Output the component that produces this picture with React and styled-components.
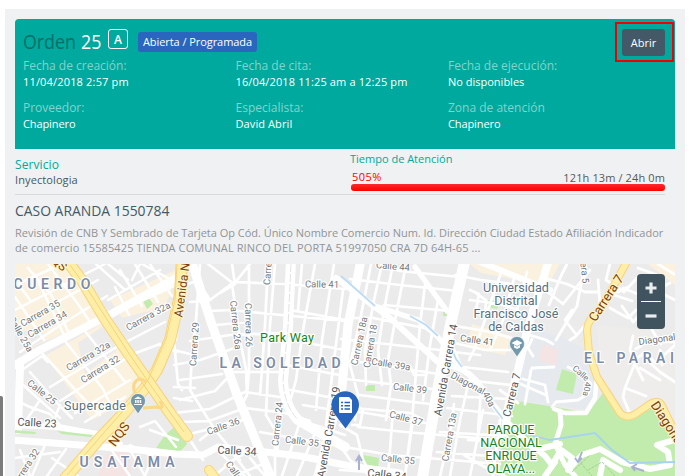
import React from "react";
import styled, { createGlobalStyle } from "styled-components";

const GlobalStyle = createGlobalStyle`
  * { box-sizing: border-box; }
  body { margin: 0; background: #fff; overflow: hidden; font-family: "Open Sans", "Noto Sans", sans-serif; }
`;

const Page = styled.div`
  display: flex;
  width: 689px;
  height: 476px;
  background: #fff;
`;
const Rail = styled.div`
  display: flex;
  align-items: flex-end;
  flex: 0 0 5px;
`;
const RailHandle = styled.div`
  width: 3px;
  height: 80px;
  background: #7c7c7c;
  border-top-right-radius: 2px;
`;
const Panel = styled.main`
  width: 680px;
  height: 467px;
  margin-top: 9px;
  padding: 10px 10px 0;
  background: #eff1f3;
  overflow: hidden;
`;
const OrderCard = styled.header`
  height: 130px;
  background: #00a99d;
  border-radius: 4px 4px 0 0;
  padding: 3px 1px 0 8px;
`;
const TitleRow = styled.div`
  display: flex;
  align-items: flex-start;
  height: 35px;
`;
const Title = styled.h1`
  width: ${(p) => p.$width};
  margin: 4px 0 0;
  font-weight: ${(p) => p.$weight || 400};
  font-size: 20px;
  line-height: 32px;
  transform: scaleX(0.89);
  transform-origin: left center;
  color: ${(p) => p.$color};
  white-space: nowrap;
`;
const TypeBadge = styled.span`
  width: 20px;
  height: 20px;
  margin: 7px 10px 0 0;
  border: 1px solid #fff;
  border-radius: 3px;
  color: #fff;
  font-size: 12px;
  font-weight: 600;
  line-height: 19px;
  text-align: center;
`;
const StatusTag = styled.span`
  width: 119px;
  height: 20px;
  margin-top: 10px;
  border-radius: 3px;
  background: #2a66bd;
  color: #fff;
  font-size: 11px;
  font-weight: 500;
  line-height: 20px;
  text-align: center;
  letter-spacing: -0.06px;
  white-space: nowrap;
`;
const Highlight = styled.div`
  width: 59px;
  height: 40px;
  margin-left: auto;
  border: 2px solid #f00000;
  padding: 5px;
`;
const OpenButton = styled.button`
  width: 43px;
  height: 27px;
  border: 0;
  border-radius: 3px;
  padding: 0;
  background: #435967;
  color: #fff;
  font: 500 11px "Open Sans", sans-serif;
`;
const Fields = styled.dl`
  display: grid;
  grid-template-columns: 212.5px 212.5px 1fr;
  grid-auto-rows: 42px;
  margin: 0;
`;
const FieldName = styled.dt`
  height: 17px;
  line-height: 17px;
  font-size: 12px;
  color: #80d4ce;
`;
const FieldValue = styled.dd`
  margin: 0;
  line-height: 16px;
  font-size: 11px;
  font-weight: 500;
  letter-spacing: ${(p) => p.$spacing || "0"};
  color: #fff;
  white-space: nowrap;
`;
const ServiceRow = styled.section`
  display: grid;
  grid-template-columns: 335px 315px;
  width: 650px;
  height: 46px;
  border-bottom: 1px solid #d9dadd;
`;
const ServiceName = styled.div`
  padding-top: 7px;
  font-size: 12px;
  letter-spacing: 0.1px;
  line-height: 17px;
  color: #00a99d;
`;
const ServiceValue = styled.div`
  font-size: 11px;
  line-height: 14px;
  letter-spacing: 0.1px;
  color: #435967;
`;
const TimeTitle = styled.div`
  font-size: 11px;
  line-height: 20px;
  height: 21px;
  color: #00a99d;
`;
const TimeFigures = styled.div`
  display: flex;
  justify-content: space-between;
  height: 14px;
  padding-left: 2px;
  font-size: 11px;
  line-height: 15px;
  color: #55595c;
  letter-spacing: 0.12px;
`;
const Percent = styled.span`
  color: #f00;
  line-height: 13px;
  letter-spacing: 0.5px;
`;
const Meter = styled.div`
  height: 7px;
  margin-left: 1px;
  border-radius: 3px;
  background: linear-gradient(#ff2a2a, #f00);
`;
const CaseTitle = styled.h2`
  margin: 3px 0 0;
  height: 26px;
  font-size: 15px;
  line-height: 24px;
  font-weight: 400;
  transform: scaleX(0.927);
  transform-origin: left center;
  color: #435967;
`;
const Description = styled.p`
  margin: 0;
  padding-top: 1px;
  height: 40px;
  font-size: 11px;
  line-height: 15px;
  color: #929497;
`;
const DescriptionLine = styled.span`
  display: block;
  letter-spacing: ${(p) => p.$spacing};
  white-space: nowrap;
`;
const MapFrame = styled.section`
  position: relative;
  height: 212px;
  overflow: hidden;
`;
const MapCanvas = styled.svg`
  display: block;
  width: 660px;
  height: 212px;
  font-family: Roboto, sans-serif;
`;
const ZoomControl = styled.div`
  position: absolute;
  top: 10px;
  right: 10px;
  display: flex;
  flex-direction: column;
  width: 28px;
  height: 55px;
  border-radius: 4px;
  background: #40545f;
`;
const ZoomButton = styled.button`
  flex: 1;
  display: grid;
  place-items: center;
  margin: 0 4px;
  padding: 0;
  border: 0;
  border-bottom: ${(p) => (p.$divided ? "1px solid #fff" : "0")};
  background: none;
`;

const Roads = ({ d, w = 3, color = "#fff" }) => (
  <path d={d} fill="none" stroke={color} strokeWidth={w} strokeLinecap="round" strokeLinejoin="round" />
);

const YellowRoad = ({ d, w = 8 }) => (
  <>
    <Roads d={d} w={w + 2} color="#f9d27a" />
    <Roads d={d} w={w} color="#ffeea6" />
  </>
);

const Label = ({ x, y, r = 0, size = 9.5, color = "#74787b", weight = 400, w, halo = "#fff", children }) => (
  <text
    transform={`translate(${x} ${y}) rotate(${r})`}
    textAnchor="middle"
    dominantBaseline="central"
    fontSize={size}
    fontWeight={weight}
    fill={color}
    stroke={halo}
    strokeWidth="2.4"
    strokeLinejoin="round"
    paintOrder="stroke"
    textLength={w}
  >
    {children}
  </text>
);

const minorLeft = `
M15 285L62 264 M15 310L105 264 M15 328L52 305L98 280 M20 352L62 324L107 296 M28 268L52 296L70 336
M48 264L78 304L92 325 M70 270L99 309 M84 278L108 314 M15 297L44 340 M36 277L65 337 M15 280L30 300
M108 300L160 270 M122 310L180 283 M130 325L185 300 M120 270L142 306 M135 264L158 302 M150 264L172 296
M115 287L129 315 M96 264L125 290 M108 264L128 280 M140 264L132 280
M43 354L80 395L100 415 M65 341L103 389L112 408 M85 331L125 382 M102 321L132 365
M30 372L58 404L72 418 M50 387L120 345L165 322 M60 401L133 354L160 344 M75 413L130 380 M85 422L125 397
M22 370L42 356L48 362 M15 400L30 407L50 414L60 425 M22 384L60 418 M40 400L25 422 M60 405L52 425
M15 458L60 452 M45 445L32 476 M66 449L47 476 M85 450L63 476 M20 450L30 476 M52 458L78 476
M142 264L168 278 M160 345L177 352 M110 448L130 476 M130 450L145 476 M140 427L155 421L176 447
M150 430L178 440 M130 445L150 455 M153 455L145 476`;
const minorCenter = `
M183 285L198 281L210 300L234 282L285 284L345 289 M190 302L208 301 M210 311L230 310L345 321
M200 264L196 320L192 355L190 390L215 430L240 460 M232 284L240 340L246 369L247 395L239 410
M249 264L249 370L247 395 M268 264L265 325L262 370L260 395 M275 264L270 325L266 415
M215 325L251 322 M190 341L230 335L280 333 M174 365L200 360L232 349 M180 380L222 374 M180 400L215 391L233 372L283 372
M174 413L210 409L245 392L280 397 M181 422L209 421L245 408L285 413L310 421 M190 434L225 425L250 418
M200 440L218 426L235 420 M203 460L190 440 M234 455L250 476 M218 451L245 476 M260 432L310 441L340 446
M266 415L275 430L275 476 M280 415L277 455 M300 422L282 476 M315 433L297 476 M235 476L265 463 M225 465L250 450
M315 264L303 330L296 380L290 402 M334 264L322 340L316 410 M343 290L334 360L326 425 M302 264L298 310
M290 310L345 320 M286 339L345 350 M286 365L345 376 M290 390L345 400 M303 405L345 412 M315 425L345 435
M174 342L178 384L182 390 M178 285L176 340 M174 350L190 354 M174 387L195 388 M174 398L192 401
M232 264L235 284L220 293 M208 264L234 284L250 264 M215 475L230 463 M250 458L265 476`;
const minorRight = `
M371 264L366 290L360 320L350 365L358 395L355 420 M382 264L374 300L365 350L366 385 M393 264L384 310L378 350L382 385
M405 270L397 310L388 360L391 385L386 420 M425 285L420 325L412 420L405 476 M438 300L430 345L423 400 M350 279L400 285L458 291
M385 267L400 271L460 277 M384 305L450 311 M346 318L373 318L430 329 M341 339L440 350 M343 360L384 365L438 374
M346 379L390 384L433 389 M360 395L405 401L430 404 M353 408L410 413L422 419 M342 411L360 412L431 424
M358 427L405 432L500 440 M345 447L390 455L500 464 M340 470L400 474 M350 400L363 410L360 425L352 425
M340 425L357 435L363 460L372 476 M340 445L350 460L370 476 M410 366L414 375L426 375 M413 420L405 476 M393 410L388 476
M450 325L490 332L511 338 M450 342L485 350L510 350 M453 352L480 355 M444 365L508 372 M447 378L512 385
M452 396L508 399 M447 408L512 416 M440 432L507 436 M468 440L498 442 M437 452L503 457 M468 385L460 420L450 476
M454 404L450 435L440 476 M464 455L490 470L505 476 M483 410L470 476 M500 420L493 476 M481 391L478 430
M477 294L486 300L485 320L474 350L469 360 M470 290L479 294L475 315 M455 275L481 280L525 286 M470 300L500 304L518 310
M502 270L488 310 M515 275L503 320L490 350 M527 272L515 318 M450 340L461 366L466 374`;
const minorEast = `
M567 264L561 276L549 305 M548 279L567 284L585 292L597 292 M549 293L563 304L590 270 M585 264L580 290L577 306L568 320L556 340
M598 280L600 305L587 323L575 337L570 340 M572 310L565 320L575 333 M530 335L546 340L553 344
M523 379L545 385L548 402 M516 382L546 395 M531 370L525 404 M518 403L500 390 M532 339L528 348L533 356 M532 368L554 367
M610 264L606 280L624 292L637 278 M623 288L640 295L642 302L650 305 M610 308L628 318L636 310 M622 306L633 322L640 315
M628 287L618 292L608 292 M614 295L632 301 M674 274L658 264 M670 283L652 292 M665 295L675 300 M638 268L660 276
M633 336L630 350L635 363L625 388L623 397L630 414 M636 349L648 341L675 342 M640 368L660 380 M635 360L645 352L655 363L675 345
M636 366L643 380 M625 388L646 396 M647 360L660 372L675 382 M662 365L660 350 M652 330L661 344
M568 367L582 374L591 384L588 394L578 400L556 402L552 407`;

const labels = [
  { t: "Carrera 35", x: 40, y: 313, r: -30 },
  { t: "Carrera 34", x: 47, y: 324, r: -30 },
  { t: "Calle 25a", x: 21, y: 334, r: 60 },
  { t: "Carrera 32a", x: 148, y: 316, r: -29 },
  { t: "Carrera 32a", x: 88, y: 356, r: -30 },
  { t: "Carrera 32", x: 100, y: 369, r: -32 },
  { t: "Calle 25", x: 42, y: 392, r: 38 },
  { t: "Carrera 32", x: 25, y: 468, r: -57 },
  { t: "Carrera 29", x: 194, y: 344, r: -86 },
  { t: "Carrera 26a", x: 236, y: 325, r: 84 },
  { t: "Carrera 26", x: 249, y: 325, r: 89 },
  { t: "Carrera 25", x: 268, y: 263, r: -86 },
  { t: "Calle 41", x: 322, y: 284, r: 1 },
  { t: "Calle 44", x: 393, y: 266, r: 5 },
  { t: "Calle 36", x: 223, y: 426, r: -20 },
  { t: "Carrera 24", x: 277, y: 424, r: -84 },
  { t: "Calle 35", x: 302, y: 441, r: 7 },
  { t: "Calle 33", x: 238, y: 476, r: 55 },
  { t: "Carrera 18a", x: 359, y: 341, r: -78 },
  { t: "Carrera 18", x: 370, y: 346, r: -80 },
  { t: "Calle 39a", x: 391, y: 364, r: 9 },
  { t: "Calle 39", x: 410, y: 388, r: 7 },
  { t: "Calle 37", x: 406, y: 418, r: 15 },
  { t: "Calle 35", x: 398, y: 459, r: 6 },
  { t: "Carrera 13a", x: 449, y: 437, r: -80 },
  { t: "Calle 41", x: 477, y: 340, r: 8 },
  { t: "Diagonal", x: 468, y: 383, r: 28 },
  { t: "40a", x: 489, y: 399, r: 62 },
  { t: "Carrera 5", x: 584, y: 264, r: 84 },
  { t: "Diagonal", x: 657, y: 339, r: -8 },
  { t: "Calle", x: 581, y: 373, r: 42, size: 8.5 },
  { t: "40a", x: 587, y: 389, r: 100, size: 8.5 },
];
const mainLabels = [
  { t: "Calle 23", x: 37, y: 423, r: 3 },
  { t: "Calle 34", x: 237, y: 451, r: 3 },
  { t: "Avenida Carrera 19", x: 329, y: 432, r: -80, w: 92 },
  { t: "Avenida Carrera 14", x: 446, y: 370, r: -80, w: 93 },
  { t: "Calle 34", x: 387, y: 475, r: 6 },
  { t: "Carrera 7", x: 512, y: 395, r: -76 },
];

function StreetMap() {
  return (
    <MapCanvas viewBox="15 264 660 212" role="img" aria-label="Mapa">
      <rect x="15" y="264" width="660" height="212" fill="#ebebeb" />
      <path d="M15 264H75L107 315L20 352L15 335ZM45 356L108 320L145 383L120 405L92 420ZM110 300L180 268L165 307L122 318Z" fill="#fbf1df" />
      <path d="M78 343L105 325L117 350L85 374ZM15 335L40 325L45 340L20 352Z" fill="#ebebeb" />
      <path d="M470 264H560L545 290L530 282L481 273ZM472 324L512 336L505 355L466 347ZM648 264H675V285Z" fill="#fbf1df" />
      <path d="M520 325L560 336L597 355V390L590 410L512 400Z" fill="#e6eaee" />
      <path d="M598 325L650 330L675 348V430L650 400L627 414L598 370Z" fill="#eeedeb" />
      <path d="M543 344L559 350L556 366L538 360Z M105 455L128 448L132 476H98Z" fill="#f4e4e4" />
      <path d="M510 400L556 407L588 413L603 393L620 417L637 416L652 405L663 410L675 438V476H500L502 440Z" fill="#c1ecae" />
      <path d="M562 369L577 374L573 394L556 390ZM363 455L379 458L378 471L362 469ZM142 299L147 295L153 304L147 309ZM165 435L177 425L187 444L180 452L156 448ZM366 385L375 385V391H366ZM488 300L500 302L497 309L488 307ZM443 311H448V316H443Z" fill="#c1ecae" />

      <Roads d={minorLeft} w={2.5} />
      <Roads d={minorCenter} w={2.7} />
      <Roads d={minorRight} w={2.7} />
      <Roads d={minorEast} w={2.8} />

      <Roads d="M13 366L40 350L68 336L113 313L180 276" w={8} />
      <Roads d="M20 366L18 430" w={8} />
      <Roads d="M15 425L58 427L97 434L120 444" w={6} />
      <Roads d="M12 440L67 444L130 449L175 454L203 455L218 447L257 451L300 456L350 466L400 473" w={7} />
      <path d="M15 430L36 432L35 434L15 433ZM57 431L94 435L90 437L62 434Z" fill="#c1ecae" />
      <Roads d="M190 256L200 288L212 325L237 395L272 480" w={9} />
      <Roads d="M291 260L288 327L283 380Q284 405 298 420L320 433L345 447" w={10} />
      <path d="M291 264L288 327L283 380Q284 405 298 420" fill="none" stroke="#e3e3e3" strokeWidth="1" strokeDasharray="8 2" />
      <Roads d="M361 260L348 325L342 387L330 430L317 480" w={9} />
      <Roads d="M336 278L378 309L390 318L438 362L461 369Q478 378 485 395L507 422L535 450" w={6} />
      <Roads d="M415 267L447 311" w={5.5} />
      <Roads d="M375 306L418 320L438 337L453 357L459 369" w={5} />
      <path d="M341 276L375 306M410 316L426 325L438 336M453 352L456 359L462 367M492 405L506 423" fill="none" stroke="#bcdcf5" strokeWidth="1.8" />
      <Roads d="M465 260L450 327L437 393L422 480" w={11} />
      <Roads d="M475 260L515 276L550 290" w={6} />
      <Roads d="M549 260L528 327L518 370L508 407L506 425" w={8} />
      <Roads d="M597 375L595 398L586 413L565 413L554 409" w={4.5} />
      <Roads d="M560 411L561 425L555 444L565 465L575 476" w={5} />
      <Roads d="M506 424L525 440L545 456L552 465L561 450L572 458L568 470L582 455L600 449L622 462L650 469L670 465L668 452L657 445L675 440" w={6} />
      <Roads d="M600 476L603 460L620 470M545 476L555 462M535 450L560 444" w={6} />
      <path d="M510 430L550 440L595 433L612 450L630 463L675 462" fill="none" stroke="#a7d3f0" strokeWidth="1.8" />
      <path d="M572 472L590 455M588 470L602 462L615 476M578 460L592 476" fill="none" stroke="#98cb87" strokeWidth="0.8" strokeDasharray="3 1" />

      <YellowRoad d="M182 256L180 295L170 340L157 370L145 388L125 412L100 438L62 482" w={10} />
      <YellowRoad d="M65 258L83 282L105 319L126 350L152 387L170 413L187 436" w={10} />
      <path d="M70 265L88 290L128 352L151 386L184 432M177 264L175 300L166 339L148 380L122 412L67 475" fill="none" stroke="#f9d27a" strokeWidth="1" />
      <path d="M143 398Q132 395 134 384Q139 375 146 382M143 408L157 407Q165 410 160 401" fill="none" stroke="#f9d888" strokeWidth="3" />
      <YellowRoad d="M209 470L217 480" w={8} />
      <YellowRoad d="M630 256L613 287L600 310Q587 320 587 330L589 353L597 377L620 413Q627 420 637 413L650 404Q660 398 663 408L679 440" w={6} />

      {labels.map((l, i) => (
        <Label key={i} {...l}>{l.t}</Label>
      ))}
      {mainLabels.map((l, i) => (
        <Label key={i} size={11} color="#53585c" {...l}>{l.t}</Label>
      ))}
      <Label x={182} y={290} r={-82} size={12} color="#7b3f0c" halo="#fff3c4" w={55}>Avenida N</Label>
      <Label x={119} y={434} r={-54} size={13} color="#7b3f0c" halo="#fff3c4">NQS</Label>
      <Label x={56} y={261} r={38} size={12} color="#7b3f0c" halo="#fff3c4">NQS</Label>
      <Label x={606} y={298} r={-57} size={13} color="#7b3f0c" halo="#fff3c4">Carrera 7</Label>
      <Label x={668} y={424} r={57} size={13} color="#7b3f0c" halo="#fff3c4">Diagonal</Label>

      <Label x={52} y={284} size={14} color="#7b8ba8" weight={600} w={77}>CUERDO</Label>
      <Label x={127} y={462} size={14} color="#7b8ba8" weight={600} w={95}>USATAMA</Label>
      <Label x={280} y={363} size={14} color="#7b8ba8" weight={600} w={121}>LA SOLEDAD</Label>
      <Label x={635.5} y={358} size={14} color="#7b8ba8" weight={600} w={103}>EL PARAIS</Label>
      <Label x={287} y={337} size={12.5} color="#168421" w={54}>Park Way</Label>
      <Label x={95} y={405} size={12.5} color="#587080" w={62}>Supercade</Label>
      {["Universidad", "Distrital", "Francisco José", "de Caldas"].map((t, i) => (
        <Label key={t} x={516} y={287 + i * 13} size={12.6} color="#587080">{t}</Label>
      ))}
      {["PARQUE", "NACIONAL", "ENRIQUE", "OLAYA..."].map((t, i) => (
        <Label key={t} x={511} y={429 + i * 13} size={12.6} color="#168421">{t}</Label>
      ))}

      <path d="M138 414L132.500 406A7.500 7.500 0 1 1 143.500 406Z" fill="#7399ab" stroke="#fff" strokeWidth=".7" />
      <path d="M134 399L138 396.500L142 399ZM135 400H136.500V403H135ZM137.300 400H138.800V403H137.300ZM139.700 400H141.200V403H139.700ZM134 404H142V405H134Z" fill="#fff" />
      <path d="M517 357L511.500 349A7.500 7.500 0 1 1 522.500 349Z" fill="#7399ab" stroke="#fff" strokeWidth=".7" />
      <path d="M511.500 343L517 340L522.500 343L517 346ZM514 345V347.500L517 349L520 347.500V345L517 346.800Z" fill="#fff" />
      <path d="M578 462L582 452M575 458L578 462L582 458M632 467L644 471M637 464L632 467L635 471" fill="none" stroke="#a8b2d0" strokeWidth="2" />
      <path d="M359 470V457M356 461L359 456L362 461" fill="none" stroke="#a8b2d0" strokeWidth="2" />
      <path d="M345.500 428.500L335 414.500C332.500 411 331.500 408 331.500 405A13.700 13.700 0 0 1 359 405C359 408 358 411 355.500 414.500Z" fill="#2765bc" />
      <path d="M340 397H349L352 400V413H340Q339 413 339 412V398Q339 397 340 397Z" fill="#fff" />
      <path d="M341 402.500H343M344.500 402.500H350M341 405.800H343M344.500 405.800H350M341 409H343M344.500 409H350" stroke="#2765bc" strokeWidth="1.6" />
    </MapCanvas>
  );
}

const fields = [
  ["Fecha de creación:", "11/04/2018 2:57 pm", "0.17px"],
  ["Fecha de cita:", "16/04/2018 11:25 am a 12:25 pm", "0.13px"],
  ["Fecha de ejecución:", "No disponibles", "0"],
  ["Proveedor:", "Chapinero", "-0.1px"],
  ["Especialista:", "David Abril", "0.1px"],
  ["Zona de atención", "Chapinero", "-0.1px"],
];

export default function App() {
  return (
    <>
      <GlobalStyle />
      <Page>
        <Rail><RailHandle /></Rail>
        <Panel>
          <OrderCard>
            <TitleRow>
              <Title $color="#006f68" $width="58px">Orden</Title>
              <Title $color="#fff" $width="27px" $weight={500}>25</Title>
              <TypeBadge>A</TypeBadge>
              <StatusTag>Abierta / Programada</StatusTag>
              <Highlight><OpenButton>Abrir</OpenButton></Highlight>
            </TitleRow>
            <Fields>
              {fields.map(([name, value, spacing]) => (
                <div key={name}>
                  <FieldName>{name}</FieldName>
                  <FieldValue $spacing={spacing}>{value}</FieldValue>
                </div>
              ))}
            </Fields>
          </OrderCard>
          <ServiceRow>
            <div>
              <ServiceName>Servicio</ServiceName>
              <ServiceValue>Inyectologia</ServiceValue>
            </div>
            <div>
              <TimeTitle>Tiempo de Atención</TimeTitle>
              <TimeFigures><Percent>505%</Percent><span>121h 13m / 24h 0m</span></TimeFigures>
              <Meter />
            </div>
          </ServiceRow>
          <CaseTitle>CASO ARANDA 1550784</CaseTitle>
          <Description>
            <DescriptionLine $spacing="-0.025px">Revisión de CNB Y Sembrado de Tarjeta Op Cód. Único Nombre Comercio Num. Id. Dirección Ciudad Estado Afiliación Indicador</DescriptionLine>
            <DescriptionLine $spacing="0.11px">de comercio 15585425 TIENDA COMUNAL RINCO DEL PORTA 51997050 CRA 7D 64H-65 ...</DescriptionLine>
          </Description>
          <MapFrame>
            <StreetMap />
            <ZoomControl>
              <ZoomButton $divided aria-label="Acercar">
                <svg width="12" height="12"><path d="M6 0.500V11.500M0.500 6H11.500" stroke="#e8edf0" strokeWidth="3.200" /></svg>
              </ZoomButton>
              <ZoomButton aria-label="Alejar">
                <svg width="12" height="12"><path d="M0.500 6H11.500" stroke="#e8edf0" strokeWidth="3.200" /></svg>
              </ZoomButton>
            </ZoomControl>
          </MapFrame>
        </Panel>
      </Page>
    </>
  );
}
